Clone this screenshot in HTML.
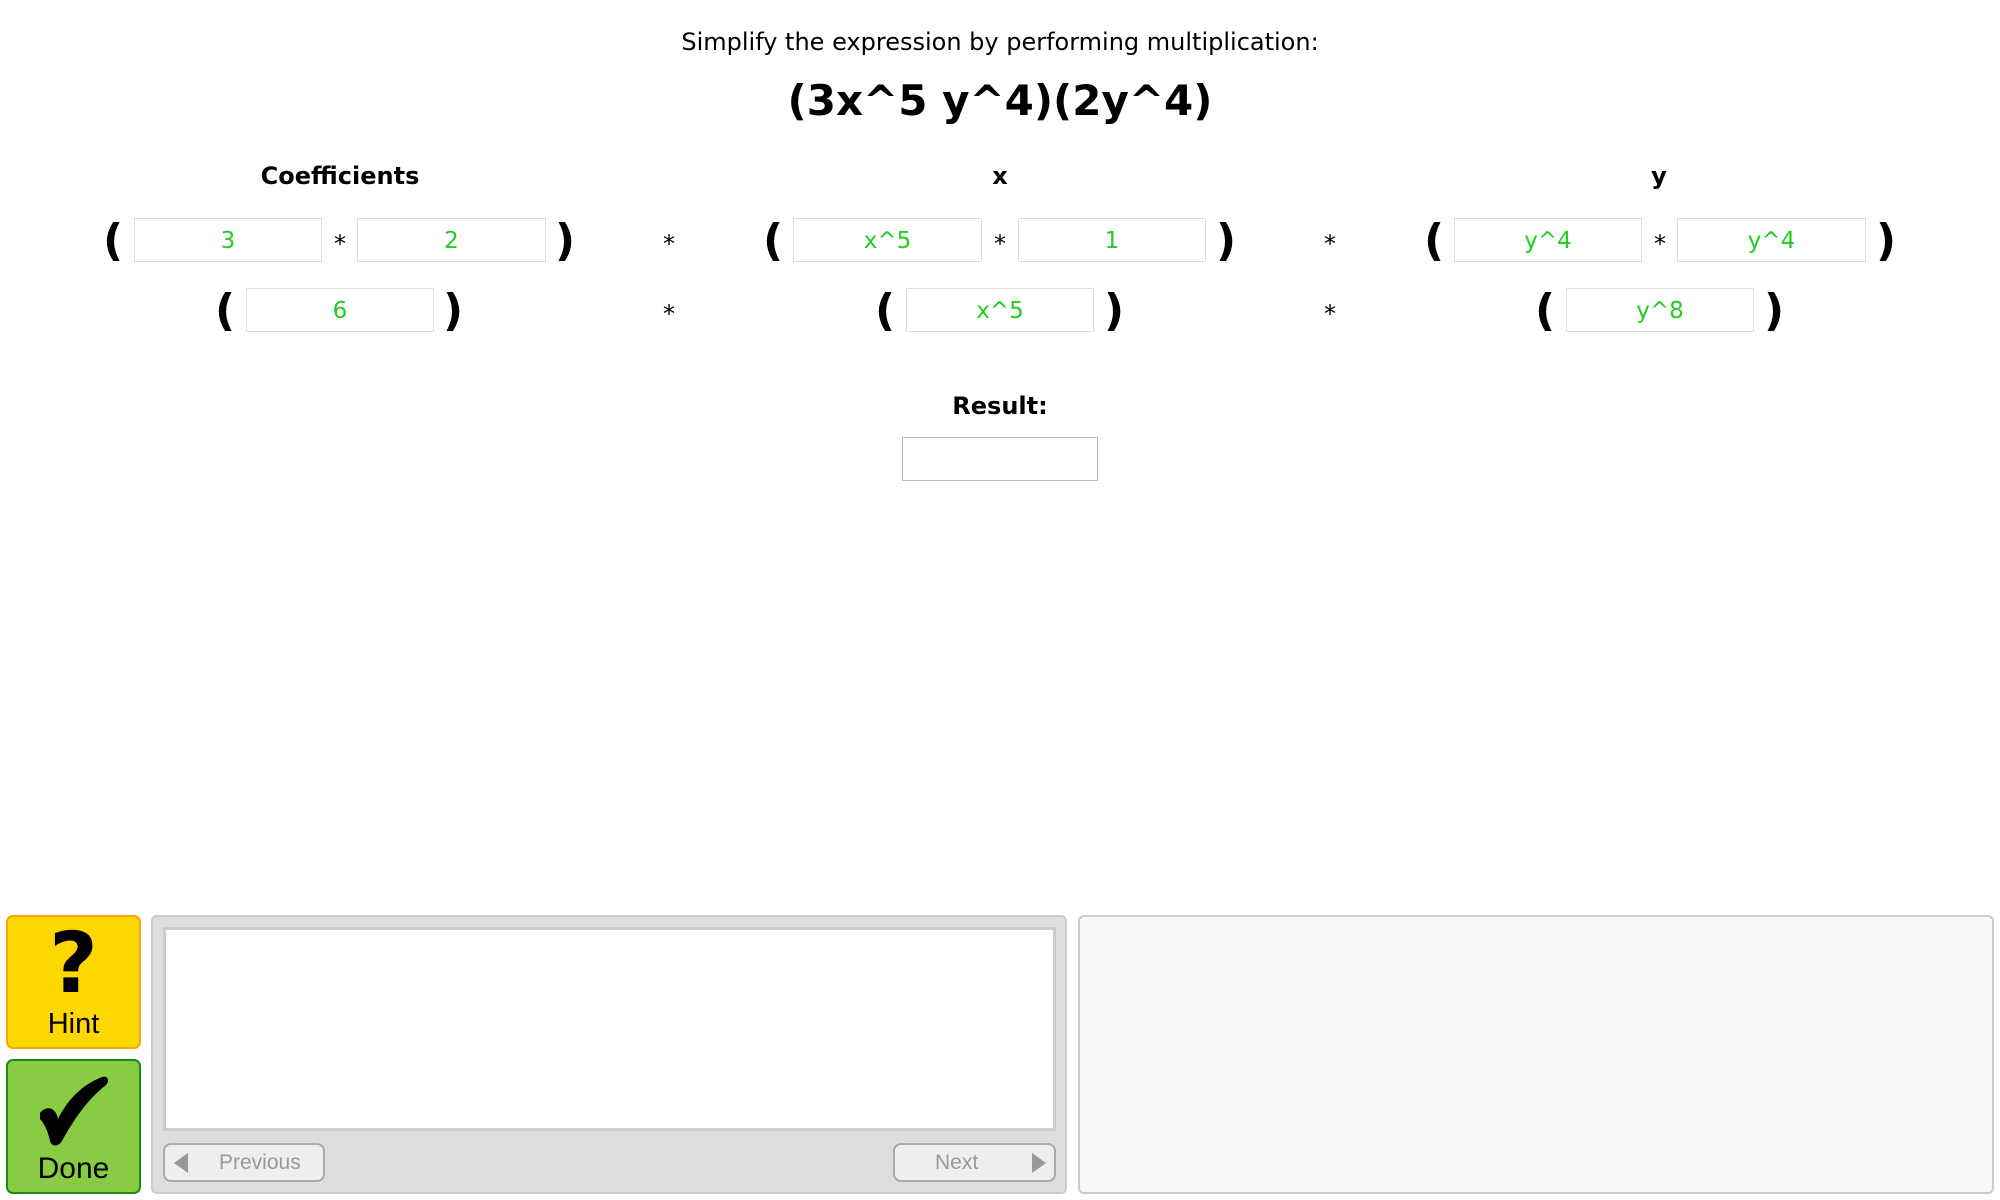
<!DOCTYPE html>
<html><head><meta charset="utf-8"><style>
body{margin:0;width:2000px;height:1200px;background:#fff;position:relative;overflow:hidden;font-family:"DejaVu Sans","Liberation Sans",sans-serif;color:#000}
.a{position:absolute}
.c{position:absolute;transform:translateX(-50%);white-space:nowrap}
.in{position:absolute;box-sizing:border-box;border:1px solid #ddd;background:#fff;color:#2c2;font-size:23px;text-align:center;line-height:44px}
.p{position:absolute;font-size:44px;line-height:44px;transform:translateX(-50%);font-weight:bold}
.s{position:absolute;font-size:24px;transform:translateX(-50%);line-height:24px}
.h{font-weight:bold;font-size:24px}
.btn{position:absolute;box-sizing:border-box;border:2px solid #aaa;border-radius:8px;background:#eee;color:#999;font-size:21px;line-height:36px;font-family:"Liberation Sans",sans-serif}
</style></head><body>
<div class="c" style="left:1000px;top:28px;font-size:24px">Simplify the expression by performing multiplication:</div>
<div class="c" style="left:1000px;top:76px;font-size:42px;font-weight:bold">(3x^5 y^4)(2y^4)</div>
<div class="c h" style="left:340px;top:162px">Coefficients</div>
<div class="c h" style="left:1000px;top:162px">x</div>
<div class="c h" style="left:1659px;top:162px">y</div>

<div class="p" style="left:113px;top:219px">(</div>
<div class="in" style="left:134px;top:218px;width:188px;height:44px">3</div>
<div class="s" style="left:340px;top:232px">*</div>
<div class="in" style="left:357px;top:218px;width:189px;height:44px">2</div>
<div class="p" style="left:565px;top:219px">)</div>
<div class="s" style="left:669px;top:232px">*</div>
<div class="p" style="left:773px;top:219px">(</div>
<div class="in" style="left:793px;top:218px;width:189px;height:44px">x^5</div>
<div class="s" style="left:1000px;top:232px">*</div>
<div class="in" style="left:1018px;top:218px;width:188px;height:44px">1</div>
<div class="p" style="left:1226px;top:219px">)</div>
<div class="s" style="left:1330px;top:232px">*</div>
<div class="p" style="left:1434px;top:219px">(</div>
<div class="in" style="left:1454px;top:218px;width:188px;height:44px">y^4</div>
<div class="s" style="left:1660px;top:232px">*</div>
<div class="in" style="left:1677px;top:218px;width:189px;height:44px">y^4</div>
<div class="p" style="left:1886px;top:219px">)</div>

<div class="p" style="left:225px;top:289px">(</div>
<div class="in" style="left:246px;top:288px;width:188px;height:44px">6</div>
<div class="p" style="left:453px;top:289px">)</div>
<div class="s" style="left:669px;top:302px">*</div>
<div class="p" style="left:885px;top:289px">(</div>
<div class="in" style="left:906px;top:288px;width:188px;height:44px">x^5</div>
<div class="p" style="left:1114px;top:289px">)</div>
<div class="s" style="left:1330px;top:302px">*</div>
<div class="p" style="left:1545px;top:289px">(</div>
<div class="in" style="left:1566px;top:288px;width:188px;height:44px">y^8</div>
<div class="p" style="left:1774px;top:289px">)</div>

<div class="c h" style="left:1000px;top:392px">Result:</div>
<div class="a" style="left:902px;top:437px;width:196px;height:44px;box-sizing:border-box;border:1px solid #bbb"></div>

<div class="a" style="left:6px;top:915px;width:135px;height:134px;box-sizing:border-box;background:#ffd700;border:2px solid #f5a800;border-radius:7px;text-align:center;font-family:'Liberation Sans',sans-serif">
 <div style="font-size:84px;font-weight:bold;line-height:84px;margin-top:4px;font-family:'DejaVu Sans',sans-serif">?</div>
 <div style="font-size:29px;line-height:30px;margin-top:4px">Hint</div>
</div>
<div class="a" style="left:6px;top:1059px;width:135px;height:135px;box-sizing:border-box;background:#88cc44;border:2px solid #1a8a1a;border-radius:7px;text-align:center;font-family:'Liberation Sans',sans-serif">
 <svg width="80" height="72" viewBox="0 0 80 72" style="margin-top:14px"><path d="M6 38 C12 30 22 32 24 44 C34 24 48 10 68 2 C74 0 76 6 72 10 C54 24 40 44 28 66 C24 72 18 72 16 66 C14 56 10 48 6 44 Z" fill="#000"/></svg>
 <div style="font-size:30px;line-height:30px;margin-top:2px">Done</div>
</div>
<div class="a" style="left:151px;top:915px;width:916px;height:279px;box-sizing:border-box;background:#ddd;border:2px solid #ccc;border-radius:6px"></div>
<div class="a" style="left:163px;top:927px;width:893px;height:204px;box-sizing:border-box;background:#fff;border:3px solid #ccc"></div>
<div class="btn" style="left:163px;top:1143px;width:162px;height:39px">
 <svg class="a" style="left:9px;top:8px" width="16" height="20"><path d="M14 0 L0 10 L14 20Z" fill="#999"/></svg>
 <span class="a" style="left:54px;top:0">Previous</span></div>
<div class="btn" style="left:893px;top:1143px;width:163px;height:39px">
 <span class="a" style="left:40px;top:0">Next</span>
 <svg class="a" style="right:8px;top:8px" width="16" height="20"><path d="M2 0 L16 10 L2 20Z" fill="#999"/></svg></div>
<div class="a" style="left:1078px;top:915px;width:916px;height:279px;box-sizing:border-box;background:#f8f8f8;border:2px solid #ccc;border-radius:6px"></div>
</body></html>
